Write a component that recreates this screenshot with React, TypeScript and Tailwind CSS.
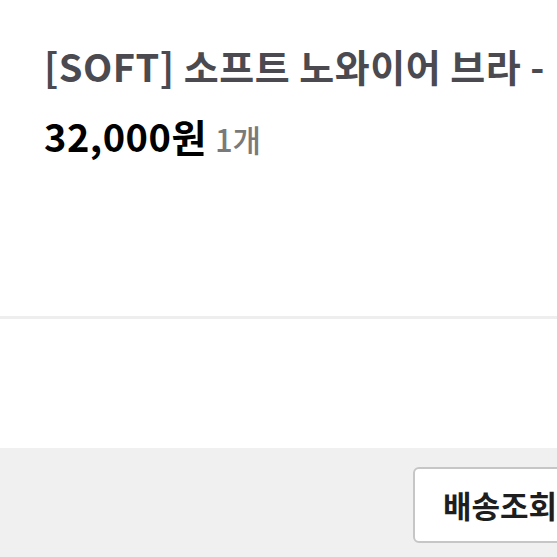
export default function App() {
  return (
    <div className="w-[557px] h-[557px] overflow-hidden flex flex-col bg-white" style={{ fontFamily: '"Noto Sans CJK KR", "Noto Sans", sans-serif' }}>
      <div className="h-[316px] shrink-0 pl-[44px] pt-[38px]">
        <div className="whitespace-nowrap text-[38px] leading-[56px] font-semibold text-[#4a4a50] tracking-[0.5px]">[SOFT] 소프트 노와이어 브라 -</div>
        <div className="mt-[16px] whitespace-nowrap leading-[52px] flex items-baseline gap-[8px]">
          <span className="text-[38px] font-bold text-black tracking-[0.5px]">32,000원</span>
          <span className="text-[31px] font-medium text-[#7a7a7a]">1개</span>
        </div>
      </div>
      <div className="h-[3px] shrink-0 bg-[#eeeeee]" />
      <div className="h-[129px] shrink-0 bg-white" />
      <div className="flex-1 bg-[#f0f0f0] pt-[19px] pl-[413px]">
        <div className="w-[200px] h-[76px] rounded-[6px] border-2 border-[#c6c6c6] bg-white flex items-center pl-[28px]">
          <span className="text-[31px] font-bold text-[#1e1e1e] whitespace-nowrap">배송조회</span>
        </div>
      </div>
    </div>
  );
}
